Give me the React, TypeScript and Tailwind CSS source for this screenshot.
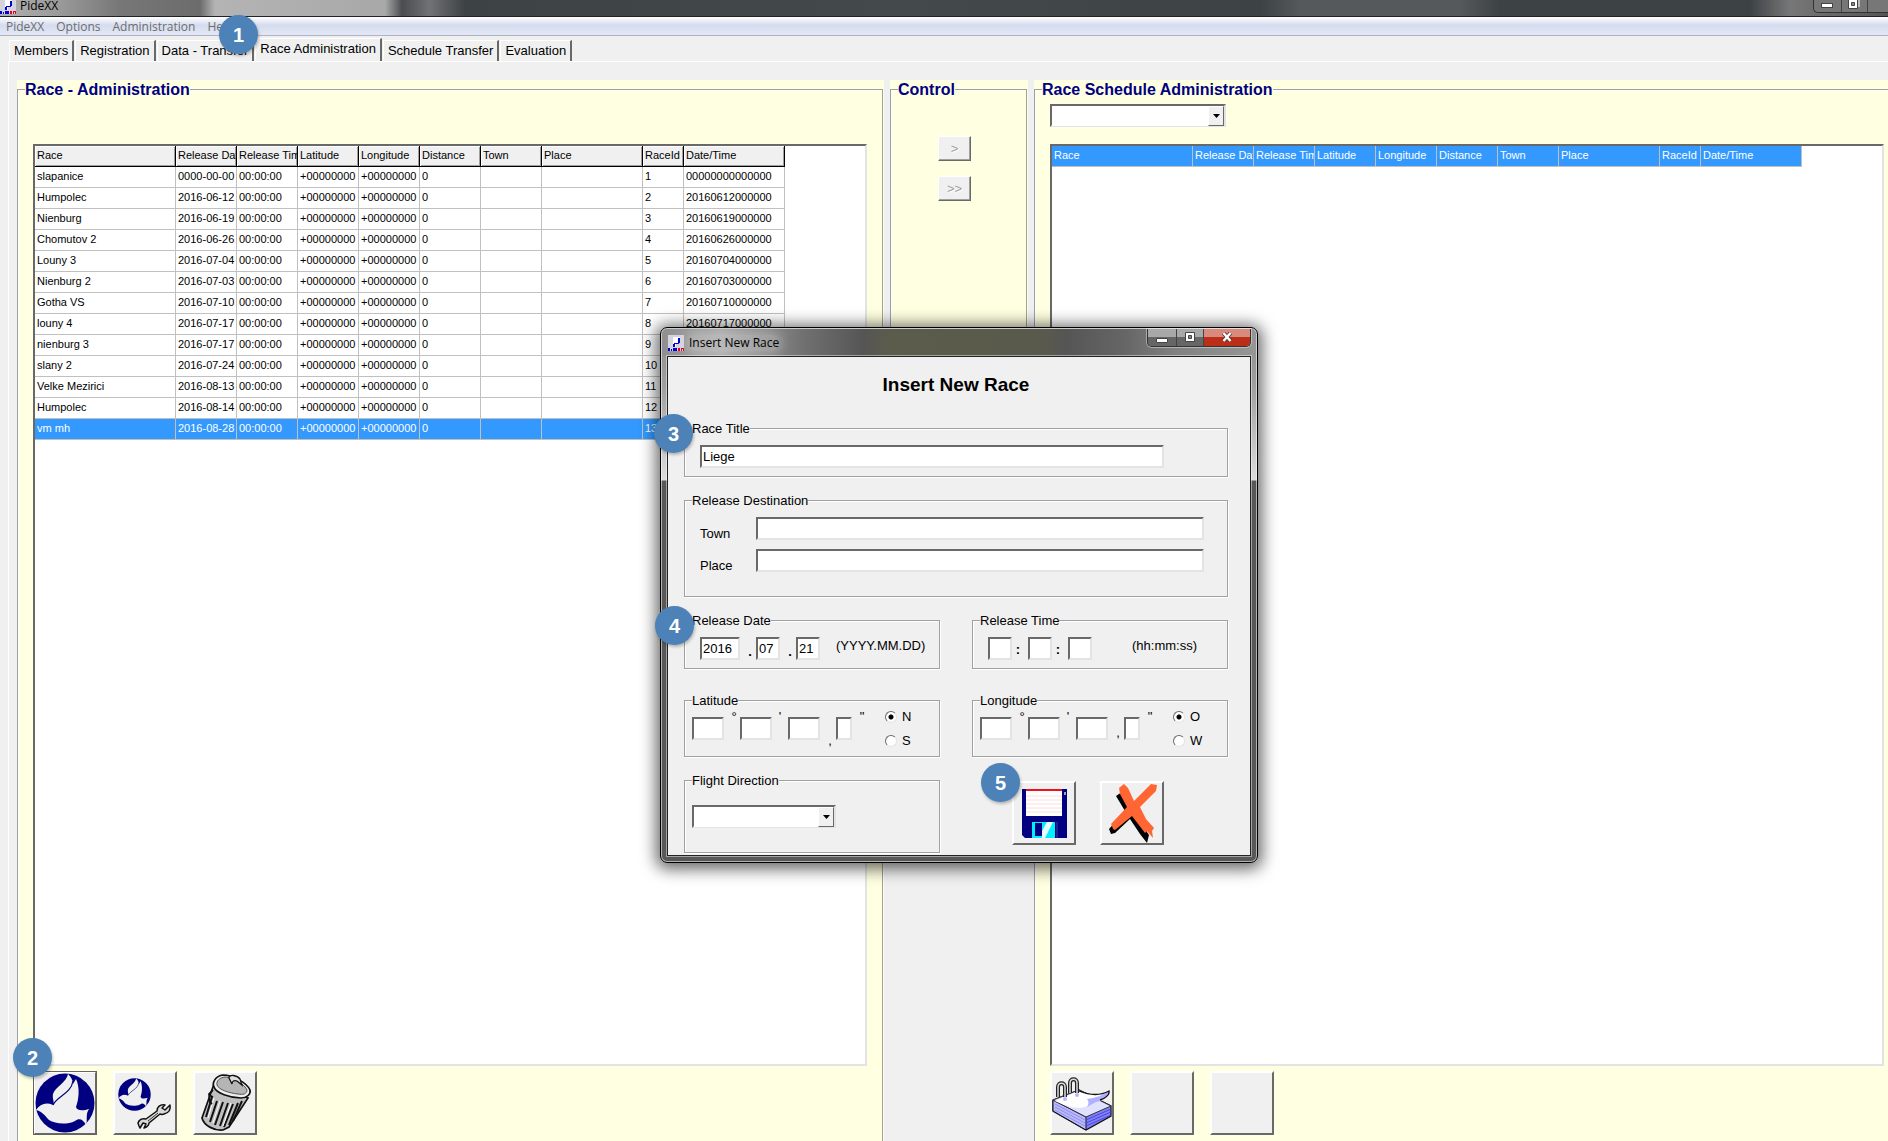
import React from 'react';

const columns = [
  { name: 'Race', width: 'w-[141px]' },
  { name: 'Release Date', width: 'w-[61px]' },
  { name: 'Release Time', width: 'w-[61px]' },
  { name: 'Latitude', width: 'w-[61px]' },
  { name: 'Longitude', width: 'w-[61px]' },
  { name: 'Distance', width: 'w-[61px]' },
  { name: 'Town', width: 'w-[61px]' },
  { name: 'Place', width: 'w-[101px]' },
  { name: 'RaceId', width: 'w-[41px]' },
  { name: 'Date/Time', width: 'w-[101px]' },
];

const races = [
  ['slapanice', '0000-00-00', '00000000000000'],
  ['Humpolec', '2016-06-12', '20160612000000'],
  ['Nienburg', '2016-06-19', '20160619000000'],
  ['Chomutov 2', '2016-06-26', '20160626000000'],
  ['Louny 3', '2016-07-04', '20160704000000'],
  ['Nienburg 2', '2016-07-03', '20160703000000'],
  ['Gotha VS', '2016-07-10', '20160710000000'],
  ['louny 4', '2016-07-17', '20160717000000'],
  ['nienburg 3', '2016-07-17', '20160717000000'],
  ['slany 2', '2016-07-24', '20160724000000'],
  ['Velke Mezirici', '2016-08-13', '20160813000000'],
  ['Humpolec', '2016-08-14', '20160814000000'],
  ['vm mh', '2016-08-28', '20160828000000'],
];

const tabs = ['Members', 'Registration', 'Data - Transfer', 'Race Administration', 'Schedule Transfer', 'Evaluation'];

const sunken = 'border-2 border-t-[#696969] border-l-[#696969] border-b-[#e3e3e3] border-r-[#e3e3e3] bg-white';

/* ---------- Icons ---------- */

const AppIcon: React.FC = () => (
  <svg viewBox="0 0 16 16" className="h-4 w-4 shrink-0" shapeRendering="crispEdges" aria-hidden="true">
    <rect width="16" height="16" fill="#d4d4dc" />
    <path d="M5 2h7v6H8v4H5z" fill="#fff" />
    <path d="M10 3h2v5h-2zM6 8h5v1H6zM5 9h2v3H5z" fill="#0000d8" />
    <path d="M0 13h2v3H0zM3 14h1v2H3zM5 13h4v3H5z" fill="#0000d8" />
    <path d="M10 13h2v3h-2zM13 13h3v3h-1v-2h-1v2h-1z" fill="#e00020" />
  </svg>
);

const DoveShape: React.FC = () => (
  <>
    <circle cx="30" cy="30" r="29.500" fill="#000080" />
    <path
      d="M1 37C5 31 11 29 18 32C20 29 17 26 18 21C20 14 32 9 33 1C36 4 38 7 38 11L41 6C45 14 44 26 41 34C42 38 48 38 54 36C50 42 53 47 51 52C48 46 44 45 40 48C32 52 20 51 14 47C10 43 8 39 1 37Z"
      fill="#f0f0f0"
    />
    <path d="M18 32C22 23 36 21 38 8" fill="none" stroke="#000080" strokeWidth="1.200" />
  </>
);

const DoveIcon: React.FC = () => (
  <svg viewBox="0 0 60 60" className="h-[60px] w-[60px]" aria-hidden="true">
    <DoveShape />
  </svg>
);

const DoveWrenchIcon: React.FC = () => (
  <svg viewBox="0 0 60 60" className="h-[60px] w-[60px]" aria-hidden="true">
    <g transform="translate(3 5) scale(.55)">
      <DoveShape />
    </g>
    <path
      d="M24 53L23 50C24 47 27 45 31 46L42 38C42 34 45 31 50 32L47 35L50 37L55 32C56 37 53 40 49 41C47 42 46 41 45 41L34 50C34 52 32 54 29 55L31 51L28 50L25 55Z"
      fill="#d8d8d8"
      stroke="#111"
      strokeWidth="1.500"
      strokeLinejoin="round"
    />
    <path d="M33 48L43 40" stroke="#333" strokeWidth="1" />
  </svg>
);

const TrashIcon: React.FC = () => (
  <svg viewBox="0 0 60 60" className="h-[60px] w-[60px]" aria-hidden="true">
    <path d="M19 11L7 45C9 53 20 58 28 57L34 54L53 25Z" fill="#c0c0c0" stroke="#111" strokeWidth="1.700" />
    <path d="M17 24L11 44M22 28L15 49M28 29L20 52M33 30L25 53M38 31L29 54M43 30L34 52M47 28L38 48" stroke="#111" strokeWidth="2" />
    <path d="M19 25L13 45M25 28L18 50M36 30L28 53" stroke="#fff" strokeWidth="1" />
    <path d="M19 14C17 10 20 3 28 2C38 2 52 10 55 17C56 21 52 25 46 25C35 25 21 20 19 14Z" fill="#eee" stroke="#111" strokeWidth="1.700" />
    <path d="M22 12C21 8 25 4 31 4C40 5 50 12 52 17C52 21 48 22 43 21C34 20 24 17 22 12Z" fill="#b5b5b5" stroke="#555" strokeWidth="1" />
    <path d="M34 5C34 1 42 2 45 6L47 12L42 8C39 7 37 8 37 11Z" fill="#ddd" stroke="#111" strokeWidth="1.300" />
    <path d="M18 17L14 21L15 29L17 31M14 22L18 24" fill="none" stroke="#111" strokeWidth="1.800" />
  </svg>
);

const NotepadIcon: React.FC = () => (
  <svg viewBox="0 0 60 60" className="h-[60px] w-[60px]" aria-hidden="true">
    <path d="M1 27L27 17L59 33V43L34 57L1 38Z" fill="#8080ff" stroke="#111" strokeWidth="1.300" />
    <path d="M1 27L34 44V57L1 38Z" fill="#b8b8ff" stroke="#111" strokeWidth="1" />
    <path d="M1 27L27 17L59 33L34 44Z" fill="#e0e0ff" stroke="#333" strokeWidth="1" />
    <path d="M34 47L59 36M34 50L59 39M34 53L59 42" stroke="#4848d8" strokeWidth="1" />
    <path d="M3 31L33 47M3 34L33 50M3 37L33 53" stroke="#9090e8" strokeWidth="1" />
    <path d="M3 28L27 18C35 22 48 23 56 18C57 23 50 28 43 28L36 33C29 36 18 35 10 31Z" fill="#fff" />
    <path d="M35 26C44 25 51 22 57 18C58 24 50 28 44 29L35 34C37 31 37 28 35 26Z" fill="#b0b0ff" />
    <path d="M27 18C37 22 48 23 57 18C58 22 52 26 48 27" fill="none" stroke="#111" strokeWidth="1.300" />
    <circle cx="13" cy="26" r="2" fill="#b8b8ff" />
    <circle cx="25" cy="22" r="2" fill="#b8b8ff" />
    <path d="M6 24V14C6 9 13 9 13 14V24M18 20V10C18 5 25 5 25 10V20" fill="none" stroke="#222" strokeWidth="4" />
    <path d="M6 24V14C6 9 13 9 13 14V24M18 20V10C18 5 25 5 25 10V20" fill="none" stroke="#ddd" strokeWidth="1.500" />
  </svg>
);

const FloppyIcon: React.FC = () => (
  <svg viewBox="0 0 60 60" className="h-[60px] w-[60px]" aria-hidden="true">
    <path d="M8 6H53V55H11L8 52Z" fill="#000080" />
    <path d="M12 7H48V33H12Z" fill="#fff" />
    <path d="M12 6H48V8H12Z" fill="#f01020" />
    <path d="M12 13H48M12 17H48M12 21H48M12 25H48M12 29H48" stroke="#fbdede" strokeWidth="1" />
    <path d="M50 9H52V12H50Z" fill="#a0a0c0" />
    <path d="M18 39H41V55H18Z" fill="#00f0ff" />
    <path d="M33 39H39L31 55H28V48Z" fill="#e8ffff" />
    <path d="M21 40H28V53H21Z" fill="#000080" />
    <path d="M43 39V55" stroke="#4040a0" strokeWidth="1" />
  </svg>
);

const CancelIcon: React.FC = () => (
  <svg viewBox="0 0 60 60" className="h-[60px] w-[60px]" aria-hidden="true">
    <path d="M14 13L20 9L28 24L35 34L47 52L45 60L38 51L28 36L13 50L9 51L7 46L23 28Z" fill="#000" />
    <path
      d="M17 5L22 1L26 5L32 18L49 1L55 2L54 8L38 24L44 36L52 45L50 48L51 55L45 48L43 50L30 33L13 47L11 46L10 43L9 41L25 24L18 11Z"
      fill="#ff6633"
    />
  </svg>
);

/* ---------- Shared pieces ---------- */

const Marker: React.FC<{ n: number; className: string }> = ({ n, className }) => (
  <span
    className={`absolute z-20 flex h-[39px] w-[39px] items-center justify-center rounded-full bg-[#4c82b8] text-[20px] font-bold text-white shadow-[1px_2px_3px_rgba(0,0,0,0.25)] ${className}`}
  >
    {n}
  </span>
);

const IconButton: React.FC<{ label: string; focused?: boolean; children?: React.ReactNode }> = ({ label, focused, children }) => (
  <button
    type="button"
    aria-label={label}
    className={`flex h-16 w-16 shrink-0 items-center justify-center border-2 border-t-white border-l-white border-b-[#696969] border-r-[#696969] bg-[#f0f0f0] ${
      focused ? 'outline-1 -outline-offset-1 outline-[#646464]' : ''
    }`}
  >
    {children}
  </button>
);

const ComboBox: React.FC<{ label: string; className: string }> = ({ label, className }) => (
  <div className={`flex h-[23px] shrink-0 ${sunken} ${className}`}>
    <div className="grid min-w-0 flex-1">
      <select aria-label={label} className="col-start-1 row-start-1 w-full appearance-none bg-white px-1 text-[13px] outline-none" />
      <span className="pointer-events-none col-start-1 row-start-1 flex w-4 items-center justify-center justify-self-end border border-t-white border-l-white border-b-[#696969] border-r-[#696969] bg-[#f0f0f0]">
        <svg viewBox="0 0 7 4" className="h-1 w-[7px]" aria-hidden="true">
          <path d="M0 0H7L3.500 4Z" fill="#000" />
        </svg>
      </span>
    </div>
  </div>
);

interface PanelProps {
  title: string;
  className?: string;
  frame?: string;
  body: string;
  children?: React.ReactNode;
}

const Panel: React.FC<PanelProps> = ({ title, className = '', frame = '', body, children }) => (
  <section className={`flex flex-col bg-[#ffffe1] ${className}`}>
    <fieldset className={`flex min-h-0 min-w-0 flex-1 flex-col border-t border-l border-[#a0a0a0] shadow-[inset_1px_1px_0_#fff] ${frame}`}>
      <legend className="ml-[7px] bg-[#ffffe1] pt-[2px] text-[16px] leading-4 font-bold whitespace-nowrap text-[#000080]">{title}</legend>
      <div className={`flex min-h-0 flex-1 flex-col ${body}`}>{children}</div>
    </fieldset>
  </section>
);

const GroupBox: React.FC<{ title: string; body: string; className?: string; children: React.ReactNode }> = ({
  title,
  body,
  className = '',
  children,
}) => (
  <fieldset className={`min-w-0 border border-[#a0a0a0] shadow-[1px_1px_0_#fff,inset_1px_1px_0_#fff] ${className}`}>
    <legend className="ml-[7px] bg-[#f0f0f0] pt-[2px] leading-4">{title}</legend>
    <div className={body}>{children}</div>
  </fieldset>
);

const TextBox: React.FC<{ label: string; width: string; value?: string; id?: string }> = ({ label, width, value = '', id }) => (
  <input id={id} type="text" aria-label={label} defaultValue={value} className={`h-[23px] min-w-0 shrink-0 px-px text-[13px] outline-none ${sunken} ${width}`} />
);

/* ---------- Race grids ---------- */

const RaceTable: React.FC = () => (
  <table className="w-[750px] table-fixed border-separate border-spacing-0 text-[11px] leading-[13px]">
    <thead>
      <tr>
        {columns.map((c) => (
          <th
            key={c.name}
            className={`h-[21px] overflow-hidden border-r border-b border-black bg-[#f0f0f0] pb-[2px] pl-[2px] text-left font-normal whitespace-nowrap shadow-[inset_1px_1px_0_#fff,inset_-1px_-1px_0_#a0a0a0] ${c.width}`}
          >
            {c.name}
          </th>
        ))}
      </tr>
    </thead>
    <tbody>
      {races.map(([race, date, stamp], i) => (
        <tr key={i} className={i === races.length - 1 ? 'bg-[#3399ff] text-white' : ''}>
          {[race, date, '00:00:00', '+00000000', '+00000000', '0', '', '', String(i + 1), stamp].map((cell, j) => (
            <td key={j} className="h-[21px] overflow-hidden border-r border-b border-[#c0c0c0] pb-[2px] pl-[2px] whitespace-nowrap">
              {cell}
            </td>
          ))}
        </tr>
      ))}
    </tbody>
  </table>
);

const ScheduleTable: React.FC = () => (
  <table className="w-[750px] table-fixed border-separate border-spacing-0 text-[11px] leading-[13px] text-white">
    <thead>
      <tr>
        {columns.map((c) => (
          <th
            key={c.name}
            className={`h-[21px] overflow-hidden border-r border-b border-[#c0c0c0] bg-[#3399ff] pb-[2px] pl-[2px] text-left font-normal whitespace-nowrap ${c.width}`}
          >
            {c.name}
          </th>
        ))}
      </tr>
    </thead>
  </table>
);

/* ---------- Dialog ---------- */

interface CoordinateProps {
  title: string;
  directions: [string, string];
  rowHeight: string;
}

const Radio: React.FC<{ name: string; label: string; checked: boolean }> = ({ name, label, checked }) => (
  <label className="flex items-center gap-[5px] leading-4">
    <input
      type="radio"
      name={name}
      defaultChecked={checked}
      className="h-3 w-3 appearance-none rounded-full border border-t-[#696969] border-l-[#696969] border-b-[#e3e3e3] border-r-[#e3e3e3] bg-white checked:bg-[radial-gradient(circle,#000_2px,#fff_3px)]"
    />
    {label}
  </label>
);

const Coordinate: React.FC<CoordinateProps> = ({ title, directions, rowHeight }) => (
  <GroupBox title={title} body="flex h-[47px] pl-[7px]">
    <div className={`flex ${rowHeight}`}>
      <div className="pt-2"><TextBox label={`${title} degrees`} width="w-8" /></div>
      <span className="w-4 pl-1 text-center leading-4">°</span>
      <div className="pt-2"><TextBox label={`${title} minutes`} width="w-8" /></div>
      <span className="w-4 text-center leading-4">'</span>
      <div className="pt-2"><TextBox label={`${title} seconds`} width="w-8" /></div>
      <span className="w-4 self-end pl-1 text-center leading-4">,</span>
      <div className="pt-2"><TextBox label={`${title} fraction`} width="w-4" /></div>
      <span className="w-4 pl-1 text-center leading-4">"</span>
    </div>
    <div className="ml-[17px] flex flex-col gap-2">
      {directions.map((d, i) => (
        <Radio key={d} name={title} label={d} checked={i === 0} />
      ))}
    </div>
  </GroupBox>
);

const InsertRaceDialog: React.FC = () => (
  <div
    role="dialog"
    aria-label="Insert New Race"
    className="absolute top-[327px] left-[660px] z-10 w-[598px] rounded-[7px] border border-black bg-[linear-gradient(180deg,#8c8c8c_0px,#a0a0a0_60px,#dcdcdc_152px,#585858_153px,#585858_100%)] shadow-[0_2px_16px_4px_rgba(0,0,0,0.6),inset_0_0_0_1px_rgba(255,255,255,0.55)]"
  >
    <div className="mx-px mt-px flex h-[27px] rounded-t-md bg-[linear-gradient(90deg,#8f8f8f_0%,#a8a8a8_10%,#707070_24%,#555_34%,#5c5c4c_38%,#5a5a4c_64%,#555_68%,#666_78%,#808080_86%,#969696_100%)] pr-[5px] pl-[6px]">
      <div className="flex items-center gap-[5px]">
        <AppIcon />
        <span className="rounded-full bg-white/20 font-['Open_Sans',sans-serif] text-[12px] leading-4 shadow-[0_0_8px_4px_rgba(255,255,255,0.2)]">Insert New Race</span>
      </div>
      <div className="ml-auto flex h-[18px] overflow-hidden rounded-b-[5px] border border-t-0 border-[#333] shadow-[0_0_0_1px_rgba(255,255,255,0.4)]">
        <button aria-label="Minimize" className="flex w-[29px] justify-center border-r border-[#444] bg-linear-to-b from-[#a8a8a8] from-50% to-[#666] to-50% pt-[9px]">
          <span className="h-[5px] w-3 rounded-[1px] border border-[#444] bg-white" />
        </button>
        <button aria-label="Maximize" className="flex w-[27px] justify-center border-r border-[#444] bg-linear-to-b from-[#a8a8a8] from-50% to-[#666] to-50% pt-[3px]">
          <svg viewBox="0 0 12 10" className="h-[10px] w-3" aria-hidden="true">
            <path d="M1.500.5H10.500V9.500H1.500Z" fill="#fff" stroke="#444" />
            <path d="M4.500 3.500H7.500V6.500H4.500Z" fill="#888" stroke="#444" />
          </svg>
        </button>
        <button aria-label="Close" className="flex w-[46px] justify-center bg-linear-to-b from-[#d98a7c] from-45% to-[#bb2f18] to-50% pt-[3px]">
          <svg viewBox="0 0 12 10" className="h-[10px] w-3" aria-hidden="true">
            <path d="M2.500 1L9.500 9M9.500 1L2.500 9" stroke="#553333" strokeWidth="4" />
            <path d="M2.500 1L9.500 9M9.500 1L2.500 9" stroke="#fff" strokeWidth="2.500" />
          </svg>
        </button>
      </div>
    </div>

    <form className="mx-[6px] mb-[6px] border border-[#222] bg-[#f0f0f0] pr-[22px] pb-[2px] pl-4 text-[13px] shadow-[0_0_0_1px_rgba(255,255,255,0.45)]">
      <h2 className="pt-4 text-center text-[19px] leading-6 font-bold">Insert New Race</h2>

      <GroupBox title="Race Title" className="mt-[22px]" body="flex pt-2 pb-2 pl-[15px]">
        <TextBox label="Race Title" width="w-[464px]" value="Liege" />
      </GroupBox>

      <GroupBox title="Release Destination" className="mt-[14px]" body="flex flex-col gap-[9px] pt-2 pr-[23px] pb-6 pl-[15px]">
        <div className="flex h-[23px]">
          <label htmlFor="town" className="w-14 shrink-0 pt-[9px] leading-4">Town</label>
          <TextBox id="town" label="Town" width="flex-1" />
        </div>
        <div className="flex h-[23px]">
          <label htmlFor="place" className="w-14 shrink-0 pt-[9px] leading-4">Place</label>
          <TextBox id="place" label="Place" width="flex-1" />
        </div>
      </GroupBox>

      <div className="mt-[14px] grid grid-cols-2 gap-x-8">
        <GroupBox title="Release Date" body="flex pt-2 pb-2 pl-[15px]">
          <TextBox label="Year" width="w-10" value="2016" />
          <span className="w-4 self-end pl-1 text-center leading-4 font-bold">.</span>
          <TextBox label="Month" width="w-6" value="07" />
          <span className="w-4 self-end pl-1 text-center leading-4 font-bold">.</span>
          <TextBox label="Day" width="w-6" value="21" />
          <span className="ml-4 leading-[18px]">(YYYY.MM.DD)</span>
        </GroupBox>
        <GroupBox title="Release Time" body="flex pt-2 pb-2 pl-[15px]">
          <TextBox label="Hours" width="w-6" />
          <span className="w-4 self-end pr-1 text-center leading-5 font-bold">:</span>
          <TextBox label="Minutes" width="w-6" />
          <span className="w-4 self-end pr-1 text-center leading-5 font-bold">:</span>
          <TextBox label="Seconds" width="w-6" />
          <span className="ml-10 leading-[18px]">(hh:mm:ss)</span>
        </GroupBox>
      </div>

      <div className="mt-[22px] grid grid-cols-2 gap-x-8">
        <Coordinate title="Latitude" directions={['N', 'S']} rowHeight="h-10" />
        <Coordinate title="Longitude" directions={['O', 'W']} rowHeight="h-8" />
      </div>

      <div className="mt-[14px] grid grid-cols-2 gap-x-8">
        <GroupBox title="Flight Direction" body="pt-4 pb-6 pl-[7px]">
          <ComboBox label="Flight Direction" className="w-36" />
        </GroupBox>
        <div className="flex gap-6 pt-[10px] pl-10">
          <IconButton label="Save"><FloppyIcon /></IconButton>
          <IconButton label="Cancel"><CancelIcon /></IconButton>
        </div>
      </div>
    </form>
    <Marker n={3} className="top-[86px] left-[-7px]" />
    <Marker n={4} className="top-[278px] left-[-6px]" />
    <Marker n={5} className="top-[435px] left-[320px]" />
  </div>
);

/* ---------- Window ---------- */

const App: React.FC = () => {
  return (
    <div className="relative flex h-screen flex-col overflow-hidden bg-[#f0f0f0] font-['Liberation_Sans',Arial,sans-serif] text-black">
      <header className="flex h-[17px] shrink-0 overflow-hidden border-b border-[#222] bg-[linear-gradient(90deg,#b0b0b0_0px,#9a9a9a_60px,#777_120px,#6c6c6c_200px,#b4b4b4_215px,#a8a8a8_385px,#4a4d50_402px,#707274_430px,#3d4245_465px,#44494c_900px,#3d4245_1260px,#55595c_1300px,#55595c_1460px,#3d4245_1500px,#3d4245_1750px,#777_1790px,#555_1888px)]">
        <div className="flex h-3 items-center gap-1">
          <AppIcon />
          <h1 className="font-['Open_Sans',sans-serif] text-[12px] leading-3">PideXX</h1>
        </div>
        <div className="ml-auto flex h-[13px] w-[75px] overflow-hidden rounded-bl-[5px] border border-t-0 border-r-0 border-[#333] bg-[#777]">
          <button aria-label="Minimize" className="flex w-7 justify-center border-r border-[#444] pt-[3px]">
            <span className="h-[5px] w-3 border border-[#444] bg-white" />
          </button>
          <button aria-label="Restore" className="flex w-[27px] justify-center border-r border-[#444]">
            <svg viewBox="0 0 12 10" className="h-[10px] w-3" aria-hidden="true">
              <path d="M.5-1H9.500V8.500H.5Z" fill="#fff" stroke="#444" />
              <path d="M3.500 2.500H6.500V5.500H3.500Z" fill="#888" stroke="#444" />
              <path d="M11 0V7" stroke="#fff" />
            </svg>
          </button>
          <button aria-label="Close" className="w-5" />
        </div>
      </header>

      <nav className="flex h-[19px] shrink-0 items-center gap-3 border-b border-[#b0b4c0] bg-linear-to-b from-white from-0% via-[#d5dcee] via-45% to-[#e2e8f6] pt-[2px] pl-[6px] font-['Open_Sans',sans-serif] text-[12px] leading-4 text-[#6d6d6d]">
        {['PideXX', 'Options', 'Administration', 'Help'].map((item) => (
          <button key={item}>{item}</button>
        ))}
      </nav>

      <div role="tablist" className="flex h-[25px] shrink-0 items-end gap-px pl-[9px] text-[13px]">
        {tabs.map((tab) => {
          const active = tab === 'Race Administration';
          return (
            <button
              key={tab}
              role="tab"
              aria-selected={active}
              className={`border-t border-r-2 border-l border-t-white border-l-white border-r-[#696969] px-1 leading-4 whitespace-nowrap ${
                active ? 'h-[23px] pb-[3px]' : 'h-[21px]'
              }`}
            >
              {tab}
            </button>
          );
        })}
      </div>

      <main className="ml-2 flex min-h-0 flex-1 border-t border-l border-white pt-[18px] pl-2">
        <div className="grid min-h-0 flex-1 grid-cols-[minmax(0,867fr)_138px_minmax(0,854fr)] gap-x-[6px]">
          <Panel title="Race - Administration" frame="mr-px border-r" body="px-[15px] pb-[6px]">
            <div className={`mt-[46px] min-h-0 flex-1 overflow-hidden ${sunken}`}>
              <RaceTable />
            </div>
            <div className="mt-[5px] flex gap-4">
              <IconButton label="New race" focused><DoveIcon /></IconButton>
              <IconButton label="Edit race"><DoveWrenchIcon /></IconButton>
              <IconButton label="Delete race"><TrashIcon /></IconButton>
            </div>
          </Panel>

          <Panel title="Control" className="h-[268px]" frame="mr-px border-r border-b" body="gap-[15px] pt-[38px] pl-[47px] text-[13px] text-[#a0a0a0]">
            {['>', '>>'].map((label) => (
              <button
                key={label}
                disabled
                className="h-[25px] w-[33px] border border-t-white border-l-white border-b-[#696969] border-r-[#696969] bg-[#f0f0f0] shadow-[inset_-1px_-1px_0_#a0a0a0] [text-shadow:1px_1px_0_#fff]"
              >
                {label}
              </button>
            ))}
          </Panel>

          <Panel title="Race Schedule Administration" body="pt-[6px] pr-1 pb-[6px] pl-[15px]">
            <ComboBox label="Race schedule" className="w-44" />
            <div className={`mt-[17px] min-h-0 flex-1 overflow-hidden ${sunken}`}>
              <ScheduleTable />
            </div>
            <div className="mt-[5px] flex gap-4">
              <IconButton label="Schedule notes"><NotepadIcon /></IconButton>
              <IconButton label="Schedule action" />
              <IconButton label="Schedule option" />
            </div>
          </Panel>
        </div>
      </main>

      <Marker n={1} className="top-[15px] left-[219px]" />
      <Marker n={2} className="top-[1038px] left-[13px]" />
      <InsertRaceDialog />
    </div>
  );
};

export default App;
